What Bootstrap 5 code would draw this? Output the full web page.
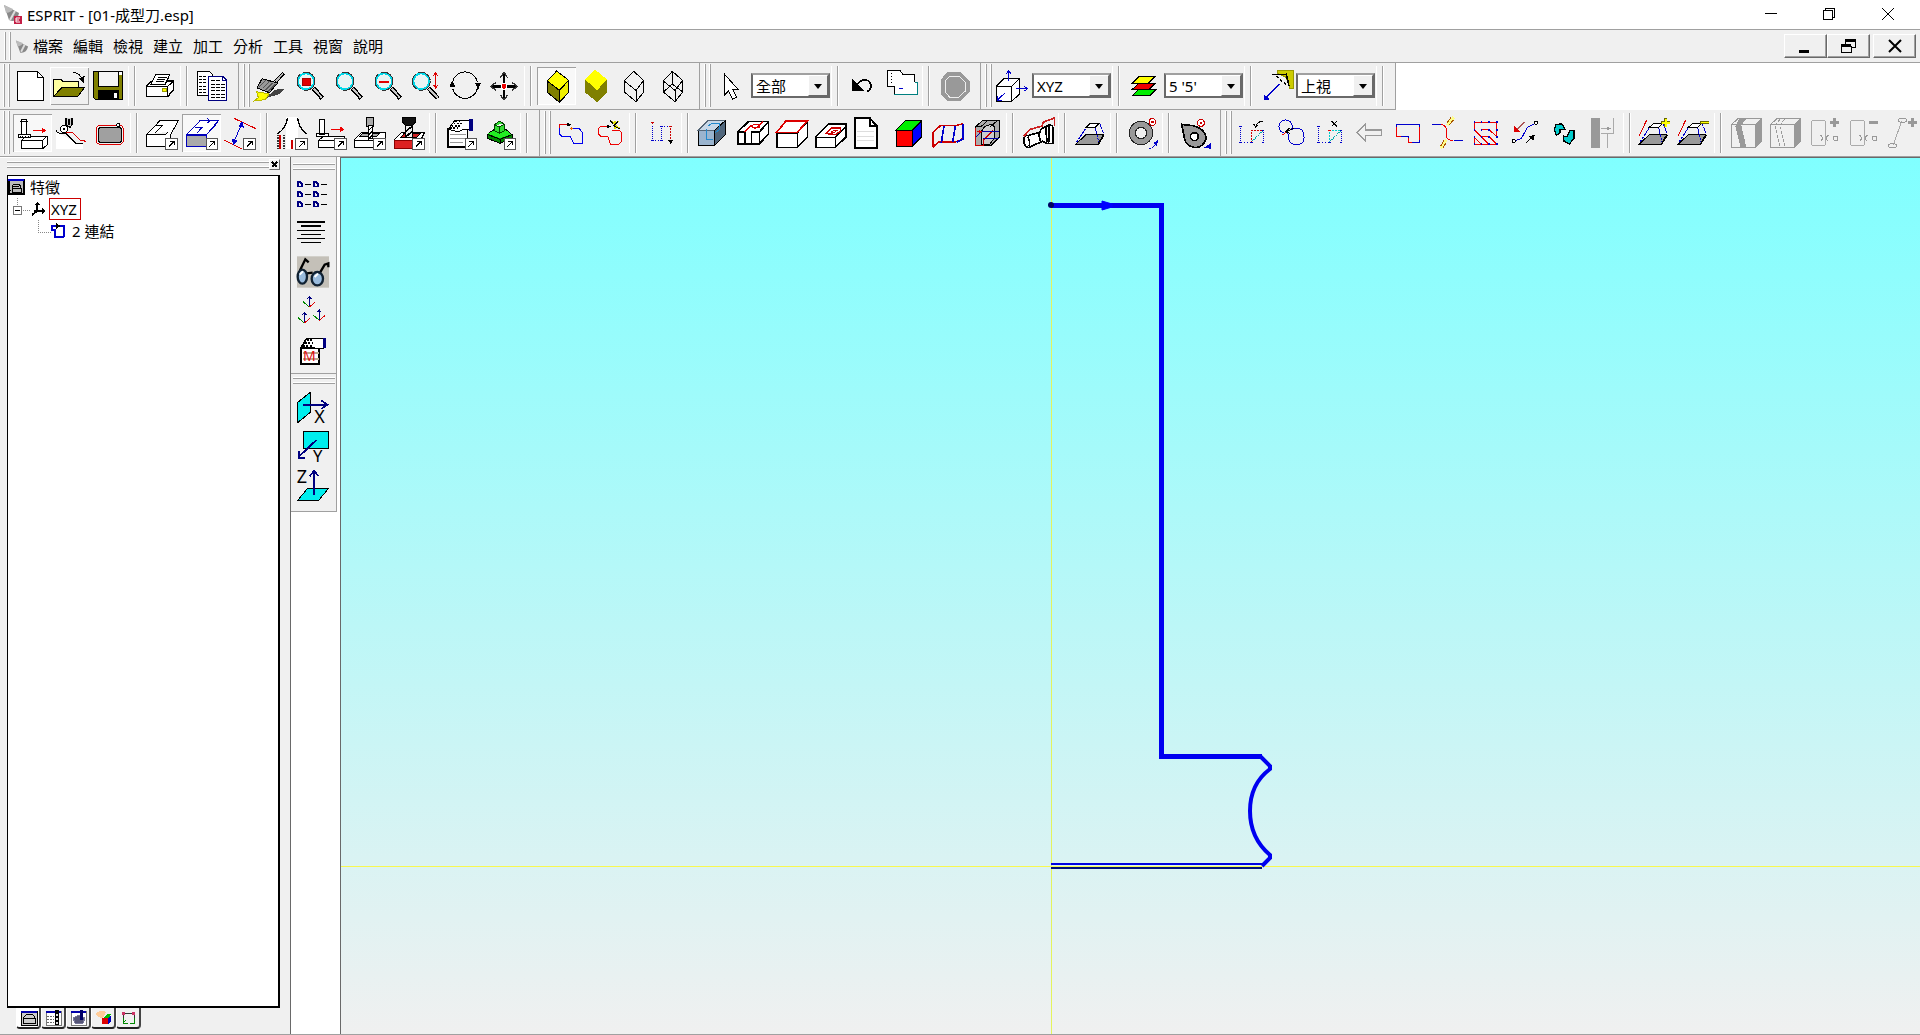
<!DOCTYPE html>
<html lang="zh-Hant">
<head>
<meta charset="utf-8">
<meta name="viewport" content="width=device-width, initial-scale=1">
<title>ESPRIT - [01-成型刀.esp]</title>
<link href="https://cdn.jsdelivr.net/npm/bootstrap@5.3.0/dist/css/bootstrap.min.css" rel="stylesheet">
<style>
:root{--face:#f0f0f0;--edge:#a0a0a0;--dark:#696969}
body{font-family:"Noto Sans","Noto Sans CJK TC",sans-serif;font-size:15px;line-height:20px;color:#000;background:#fff}
button{padding:0;border:0;background:none;color:inherit}
svg{display:block;fill:none;stroke:#000;stroke-width:3}
.titlebar{height:30px;border-bottom:1px solid var(--edge);background:#fff}
.app-icon{width:20px;height:22px}
.app-name{font-size:15px;margin-left:3px}
.win-btns{margin-right:2px}
.win-btn{width:59px;height:29px}
.menubar{height:33px;background:var(--face);border-bottom:1px solid var(--edge)}
.menubar .grip{height:28px}
.menu-links{margin-left:4px}
.menubar a{color:#000;text-decoration:none;width:40px;white-space:nowrap}
.mdi{width:43px;height:24px;background:var(--face);border:1px solid;border-color:#fff var(--dark) var(--dark) #fff;box-shadow:inset -1px -1px var(--edge)}
.mdi-btns{padding-right:4px}
.mdi-btns .mdi:last-child{margin-left:3px}
.grip{width:7px;flex:none;border:solid;border-width:0 1px;border-color:transparent var(--edge) transparent #fff;box-shadow:inset 1px 0 var(--edge),inset -1px 0 #fff}
.bar-row{height:47px;overflow:hidden;background:#fff}
.tbar{height:47px;flex:none;background:var(--face);padding:4px 6px 4px 4px;border-right:1px solid var(--edge);border-bottom:1px solid var(--edge);align-items:center}
.tbar .grip{height:43px;margin:-2px 1px 0 0}
.tbar .grip.snug{margin-right:0}
.tbar .grip.wide{margin-right:3px}
.bar-row.first-row{margin-left:-1px}
.tb{width:39px;height:38px;flex:none}
.tb svg{width:39px;height:38px}
.pressed{background:#f8f8f8;box-shadow:inset 1px 1px var(--edge),inset -1px -1px #fff}
.raised{box-shadow:inset 1px 1px #fff,inset -1px -1px var(--edge)}
.vsep{width:13px;height:40px;flex:none;border-left:6px solid transparent;background:linear-gradient(90deg,var(--edge) 1px,#fff 1px,#fff 2px,transparent 2px)}
.combo{width:79px;height:25px;background:#fff;border:2px solid;border-color:var(--edge) var(--dark) var(--dark) var(--dark);margin-top:-1px;margin-right:1px}
.combo select{width:100%;height:21px;border:0;appearance:none;background:#fff;padding:0 0 0 3px;font-size:15px;line-height:20px;color:#000}
.combo span{right:0;top:0;width:20px;height:21px;background:var(--face);border:1px solid;border-color:#fff var(--dark) var(--dark) #fff;pointer-events:none}
.combo span::after{content:"";position:absolute;left:5px;top:8px;border:4px solid transparent;border-top:5px solid #000;border-bottom:0}
.workspace{min-height:0;border-bottom:1px solid var(--edge)}
.side{width:290px;flex:none;background:var(--face);padding:1px 10px 4px 7px;border-top:1px solid #fff}
.hgrip{height:7px;border-top:1px solid #fff;border-bottom:1px solid var(--edge);box-shadow:inset 0 1px var(--edge),inset 0 -1px #fff}
.close-btn{width:11px;height:11px;border:1px solid;border-color:#fff var(--dark) var(--dark) #fff}
.tree-box{background:#fff;border:1px solid #000;border-width:1px 2px 2px 1px;margin-top:5px}
.tree-row{height:22px;white-space:nowrap}
.tree-row span{margin-left:5px}
.tree-row .picked{border:1px solid #c00;line-height:20px;height:22px;width:32px;margin-left:0;padding-left:1px}
.tabs-row{height:22px;padding-left:9px}
.tabs-row button{width:25px;height:21px;background:var(--face);border:solid;border-width:0 2px 2px 1px;border-color:#000 #444 #222 #fff;border-radius:0 0 4px 4px;padding-left:3px}
.tabs-row button:first-child{background:#fff}
.tools{width:51px;flex:none;border-left:1px solid var(--dark);border-right:1px solid var(--dark);background:#fff}
.vbar{width:46px;background:var(--face);border-right:1px solid var(--edge);border-bottom:1px solid var(--edge)}
.vbar.views{padding:6px 0 1px}
.vbar.planes{padding:3px 0 6px}
.vbar .hgrip{margin:0 1px 7px 2px}
.vbar.planes .hgrip{margin-bottom:4px}
.vt{width:45px;height:39px;display:block}
.vt svg{width:46px;height:39px;overflow:visible}
.viewport3d{background:linear-gradient(#80ffff,#f0f0f0);border-top:1px solid var(--dark);min-width:0}
.px{shape-rendering:crispEdges}
text{stroke:none;fill:#000}
</style>
</head>
<body class="vh-100 d-flex flex-column overflow-hidden">
<svg width="0" height="0" class="position-absolute" aria-hidden="true"><defs>
<symbol id="pop" viewBox="0 0 39 36" width="39" height="36" overflow="visible"><path d="M1 1H36V33H1Z" fill="#fff" stroke="#555"/><path d="M11 26L27 9M14 9H27V22"/></symbol>
<symbol id="lens" viewBox="0 0 117 114" width="117" height="114"><path d="M70 63L97 94" stroke="#000" stroke-width="14"/><path d="M71 65L96 92" stroke="#c8c8c8" stroke-width="6"/><circle cx="48" cy="43" r="24" fill="#e8f4f4" stroke="#00d8e8" stroke-width="6"/><circle cx="48" cy="43" r="27" stroke="#333" stroke-dasharray="50 8"/></symbol>
<symbol id="cone" viewBox="0 0 16 18"><path d="M1 2L6 16Q13 17 15 9Z" fill="#888" stroke="none"/><path d="M1 2L3 9Q8 8 9 5Z" fill="#bbb" stroke="none"/><path d="M7 15L11 7" stroke="#ddd" stroke-width="2"/></symbol>
<symbol id="taper" viewBox="0 0 117 114" width="117" height="114"><path d="M42 40L55 28H82L70 40Z" fill="#fff"/><path d="M12 90L42 62H94L78 90Z" fill="#999"/><path d="M12 90H80L97 62"/><path d="M14 84L42 42M84 30L95 58M70 42L80 84" stroke="#00c" stroke-dasharray="8 2"/></symbol>
</defs></svg>

<header class="titlebar d-flex align-items-center flex-shrink-0">
 <svg class="ms-1 app-icon" viewBox="0 0 20 22"><path d="M0 1L5 16Q13 20 15 9Z" fill="#888" stroke="none"/><path d="M0 1L2 9Q8 8 9 5Z" fill="#bbb" stroke="none"/><path d="M6 16L11 7" stroke="#ddd" stroke-width="2"/><path d="M10 12H18V20H10Z" fill="#c41e45" stroke="none"/><path d="M16 14H12V18H16M12 16H15" stroke="#fff" stroke-width="1"/></svg>
 <span class="app-name">ESPRIT - [01-成型刀.esp]</span>
 <div class="win-btns ms-auto d-flex px">
  <button class="win-btn" aria-label="最小化"><svg width="59" height="29" viewBox="0 0 59 29"><path d="M24 13.5H36" stroke-width="1"/></svg></button>
  <button class="win-btn" aria-label="還原"><svg width="59" height="29" viewBox="0 0 59 29"><path d="M23.5 10.5H32.5V19.5H23.5ZM25.5 10V8.5H34.5V17.5H33" stroke-width="1"/></svg></button>
  <button class="win-btn" aria-label="關閉"><svg width="59" height="29" viewBox="0 0 59 29" shape-rendering="auto"><path d="M23 8L35 20M35 8L23 20" stroke-width="1"/></svg></button>
 </div>
</header>

<nav class="menubar d-flex align-items-center flex-shrink-0 ps-1">
 <div class="grip"></div>
 <svg class="ms-1" width="14" height="17"><use href="#cone" width="14" height="17"/></svg>
 <div class="menu-links d-flex"><a href="#">檔案</a><a href="#">編輯</a><a href="#">檢視</a><a href="#">建立</a><a href="#">加工</a><a href="#">分析</a><a href="#">工具</a><a href="#">視窗</a><a href="#">說明</a></div>
 <div class="mdi-btns ms-auto d-flex px">
  <button class="mdi" aria-label="最小化文件"><svg width="41" height="22" viewBox="0 0 41 22"><path d="M14 16.5H24"/></svg></button>
  <button class="mdi" aria-label="還原文件"><svg width="41" height="22" viewBox="0 0 41 22"><path d="M17 5.5H28M13 10.5H23"/><path d="M17.5 9V6M27.5 6V12.5H24M13.5 11V17.5H23.5V11" stroke-width="1"/></svg></button>
  <button class="mdi" aria-label="關閉文件"><svg width="41" height="22" viewBox="0 0 41 22" shape-rendering="auto"><path d="M15 5L27 17M27 5L15 17" stroke-width="2"/></svg></button>
 </div>
</nav>

<div class="bar-row first-row d-flex flex-shrink-0 px">
 <div class="tbar d-flex"><div class="grip"></div>
  <button class="tb" aria-label="開新檔案"><svg viewBox="33 201 117 114"><path d="M52 214H112L130 232V301H52Z" fill="#fff"/><path d="M112 214V233H130"/></svg></button>
  <button class="tb raised" aria-label="開啟"><svg viewBox="150 201 117 114"><path d="M161 289V238H182L188 244H235V262" fill="#ffffa0"/><path d="M161 289L186 262H254L234 289Z" fill="#808000"/><path d="M219 218Q240 216 246 240"/><path d="M239 236L250 247L252 230Z" fill="#000"/></svg></button>
  <button class="tb" aria-label="儲存"><svg viewBox="267 201 117 114"><path d="M281 214H368V299H287L281 292Z" fill="#808000"/><path d="M295 214H355V258H295Z" fill="#f4f4f4"/><path d="M295 272H356V299H295Z" fill="#000"/><path d="M341 278H352V296H341Z" fill="#fff"/><path d="M358 217H366V224H358Z" fill="#fff" stroke="none"/></svg></button>
  <span class="vsep"></span>
  <button class="tb" aria-label="列印"><svg viewBox="423 201 117 114"><path d="M439 259L456 243H520V270L503 290H439Z" fill="#fff" stroke-width="4"/><path d="M439 259H503V290M503 259L520 243" stroke-width="4"/><path d="M453 252L468 223H510L496 252Z" fill="#fff"/><path d="M475 231H500M471 238H496M467 245H492"/><path d="M488 266H499V274H488Z" fill="#ff0" stroke="#990"/></svg></button>
  <span class="vsep"></span>
  <button class="tb" aria-label="複製"><svg viewBox="579 201 117 114"><path d="M592 214H628L638 225V287H592Z" fill="#fff"/><path d="M598 228H622M598 238H622M598 248H622M598 258H622M598 268H622M598 278H622" stroke-dasharray="9 3"/><path d="M625 229H668L680 241V301H625Z" fill="#fff" stroke="#000080"/><path d="M668 229V241H680" stroke="#000080"/><path d="M632 242H661M632 252H674M632 262H674M632 272H674M632 282H674M632 292H674" stroke-dasharray="12 3"/></svg></button>
 </div>
 <div class="tbar d-flex"><div class="grip"></div>
  <button class="tb" aria-label="重繪"><svg viewBox="753 201 117 114"><path d="M795 295L840 282L856 266L825 269Z" fill="#444" stroke="none"/><path d="M826 245L851 219" stroke="#000" stroke-width="10"/><path d="M827 244L850 220" stroke="#bbb" stroke-width="5"/><path d="M786 236L833 249L808 278L771 264Z" fill="#999"/><path d="M779 260L797 241M788 265L808 244M797 270L818 248M804 275L827 251" stroke="#555"/><path d="M770 275L807 282L796 299L762 303L775 293Z" fill="#ff0" stroke="#bb0"/></svg></button>
  <button class="tb" aria-label="框選縮放"><svg viewBox="0 0 117 114"><use href="#lens"/><path d="M36 35H62V54H36Z" fill="#e00000" stroke="#a00"/></svg></button>
  <button class="tb" aria-label="縮放"><svg viewBox="0 0 117 114"><use href="#lens"/></svg></button>
  <button class="tb" aria-label="縮小"><svg viewBox="0 0 117 114"><use href="#lens"/><path d="M33 46H64" stroke="#e00000" stroke-width="6"/></svg></button>
  <button class="tb" aria-label="動態縮放"><svg viewBox="0 0 117 114"><use href="#lens" x="-5"/><path d="M86 20V60M80 26L86 17L92 26M80 54L86 63L92 54" stroke="#d00"/></svg></button>
  <button class="tb" aria-label="旋轉"><svg viewBox="1338 201 117 114"><path d="M1358 245A38 38 0 0 1 1432 245M1358 266A38 38 0 0 0 1432 266"/><path d="M1350 260L1357 244L1365 260ZM1427 250L1434 266L1441 250Z" fill="#000"/></svg></button>
  <button class="tb" aria-label="平移"><svg viewBox="15 201 117 114"><path d="M72 220V298M33 259H111" stroke-width="8"/><path d="M61 234L72 217L83 234M61 285L72 300L83 285M48 247L32 259L48 271M96 247L112 259L96 271" stroke="#333" stroke-width="4"/><circle cx="72" cy="259" r="9" fill="#e00" stroke="#fff"/></svg></button>
  <span class="vsep"></span>
  <button class="tb pressed" aria-label="著色含邊"><svg viewBox="171 201 117 114"><path d="M202 243L230 213L266 241L238 271Z" fill="#ff0"/><path d="M202 243L238 271V307L202 277Z" fill="#808000"/><path d="M238 271L266 241V277L238 307Z" fill="#ee0"/></svg></button>
  <button class="tb" aria-label="著色"><svg viewBox="288 201 117 114"><path d="M315 238L345 209L381 238L351 271Z" fill="#ff0" stroke="none"/><path d="M315 238L351 271V306L315 277ZM381 238L351 271V306L381 277Z" fill="#808000" stroke="none"/></svg></button>
  <button class="tb" aria-label="隱藏線"><svg viewBox="405 201 117 114"><path d="M433 243L461 214L491 241V276L468 305L433 276ZM433 243L468 271L491 241M468 271V305"/></svg></button>
  <button class="tb" aria-label="線框"><svg viewBox="522 201 117 114"><path d="M550 243L577 214L608 241V276L585 305L550 276ZM550 243L585 271L608 241M585 271V305M577 214V252L550 276M577 252L608 276"/></svg></button>
 </div>
 <div class="tbar d-flex"><div class="grip"></div>
  <button class="tb" aria-label="選取"><svg viewBox="696 201 117 114"><path d="M733 222V286L746 273L758 298L770 292L758 269H775Z" fill="#fff"/></svg></button>
  <div class="combo position-relative"><select aria-label="選取類型"><option>全部</option></select><span class="position-absolute"></span></div>
  <span class="vsep"></span>
  <button class="tb" aria-label="復原"><svg viewBox="1089 201 117 114"><path d="M1123 262Q1135 239 1154 239Q1170 244 1170 258Q1170 270 1158 275" stroke-width="5"/><path d="M1115 241V270H1145Z" fill="#000"/></svg></button>
  <button class="tb" aria-label="群組"><svg viewBox="1206 201 117 114"><path d="M1219 212H1261L1266 222H1298L1301 248H1310V283H1242V258H1219Z" fill="#fff" stroke="none"/><path d="M1219 258V212H1258L1265 223H1300V246M1219 258H1240V283"/><path d="M1240 283H1310V248H1301" stroke="#008080"/><path d="M1230 220V250" stroke-dasharray="3 6"/><path d="M1255 265H1265" stroke="#00c"/></svg></button>
  <span class="vsep"></span>
  <button class="tb" aria-label="停止"><svg viewBox="1362 201 117 114"><path d="M1399 216H1438L1466 243V277L1438 304H1399L1380 284V238Z" fill="#999" stroke="none"/><path d="M1406 228H1434L1453 247V273L1434 291H1406L1392 276V243Z" stroke="#eee"/></svg></button>
 </div>
 <div class="tbar d-flex"><div class="grip"></div>
  <button class="tb" aria-label="工作座標"><svg viewBox="99 201 117 114"><path d="M109 259L132 236H179V282L155 304H109ZM109 259H155V304M155 259L179 236" fill="#fff"/><path d="M146 244V213M139 222L146 212L153 222M168 266H202M193 259L203 266L193 273M136 278L112 300M112 288V300H125" stroke="#00c"/></svg></button>
  <div class="combo position-relative"><select aria-label="工作座標系"><option>XYZ</option></select><span class="position-absolute"></span></div>
  <span class="vsep"></span>
  <button class="tb" aria-label="圖層"><svg viewBox="492 201 117 114"><path d="M514 287L534 268H586L567 287Z" fill="#0e0"/><path d="M514 268L534 249H584L565 268Z" fill="#e00"/><path d="M514 249L534 230H582L563 249Z" fill="#ff0"/></svg></button>
  <div class="combo position-relative"><select aria-label="目前圖層"><option>5 '5'</option></select><span class="position-absolute"></span></div>
  <span class="vsep"></span>
  <button class="tb" aria-label="視角"><svg viewBox="888 201 117 114"><path d="M950 210H996V264H986L976 232L950 220Z" fill="#cc0" stroke="#990"/><path d="M934 224L976 223L984 258" stroke-width="5"/><path d="M945 228L978 256" stroke-width="4" stroke-dasharray="10 5"/><path d="M956 252L912 296" stroke="#00c"/><path d="M910 300V286L923 297Z" fill="#00c" stroke="#00c"/></svg></button>
  <div class="combo position-relative"><select aria-label="目前視角"><option>上視</option></select><span class="position-absolute"></span></div>
  <span class="vsep"></span>
 </div>
</div>

<div class="bar-row first-row d-flex flex-shrink-0 px">
 <div class="tbar d-flex"><div class="grip wide"></div>
  <button class="tb pressed" aria-label="銑削"><svg viewBox="39 342 117 114"><path d="M64 421L80 408H142V434L128 446H64ZM64 421H128V446M128 421L142 408" fill="#fff"/><path d="M64 358H80V402H64ZM56 402H92V411H56Z" fill="#fff"/><path d="M60 364H84M60 408V414M68 408V414M76 408V414M84 408V414"/><path d="M98 391H128" stroke="#e00"/><path d="M126 385L137 391L126 397Z" fill="#e00" stroke="#e00"/></svg></button>
  <button class="tb" aria-label="曲面加工"><svg viewBox="156 342 117 114"><path d="M168 395L235 432L250 433V446H168Z" fill="#fff" stroke="none"/><path d="M198 354V376L210 382L216 374V354M207 356V374" fill="#ccc" stroke-width="4"/><circle cx="192" cy="387" r="11" fill="#fff"/><circle cx="192" cy="387" r="3"/><path d="M168 392Q178 405 198 401L212 414L228 431H250"/><path d="M198 399L218 398L240 420L258 424" stroke="#d00"/></svg></button>
  <button class="tb" aria-label="輪廓"><svg viewBox="273 342 117 114"><rect x="295" y="383" width="70" height="44" rx="7" fill="#a0a0a0"/><rect x="289" y="376" width="81" height="57" rx="12" stroke="#d00"/><circle cx="355" cy="375" r="5" fill="#fff"/></svg></button>
  <span class="vsep"></span>
  <button class="tb" aria-label="面特徵"><svg viewBox="429 342 117 114"><path d="M439 404L480 362H535L512 404V438H439ZM439 404H496L505 395" fill="#fff"/><path d="M466 376H488L466 398"/><use href="#pop" x="496" y="414"/></svg></button>
  <button class="tb pressed" aria-label="特徵鏈"><svg viewBox="546 342 117 114"><path d="M560 404L600 362H655L620 404ZM586 382H606L590 400" fill="#fff" stroke="#00b"/><path d="M560 405H620V440H560Z" fill="#aaa" stroke="#00b"/><path d="M620 404L655 365M622 356L630 362L622 369" stroke="#00b"/><use href="#pop" x="617" y="414"/></svg></button>
  <button class="tb" aria-label="尺寸"><svg viewBox="663 342 117 114"><path d="M702 355L768 386M673 421L727 447" stroke="#d00"/><path d="M724 374L702 425" stroke="#00c"/><path d="M717 378L726 367L730 381ZM698 418L700 432L710 423Z" fill="#00c" stroke="#00c"/><use href="#pop" x="730" y="414"/></svg></button>
  <span class="vsep"></span>
  <button class="tb" aria-label="車削刀具"><svg viewBox="819 342 117 114"><path d="M859 352H893V446H859Z" fill="#fff" stroke="none"/><path d="M862 354Q861 382 832 402M893 354Q894 382 921 402" stroke-width="4"/><path d="M833 404V446M852 404V446" stroke="#333" stroke-width="6" stroke-dasharray="5 3"/><path d="M841 404V446M877 420V446" stroke="#c00" stroke-width="6"/><use href="#pop" x="887" y="414"/></svg></button>
  <button class="tb" aria-label="銑削刀具"><svg viewBox="936 342 117 114"><path d="M955 421L972 408H1034V442H955ZM955 421H1016" fill="#fff"/><path d="M958 358H974V402H958ZM949 400H986V408H949Z" fill="#fff"/><path d="M994 388H1022" stroke="#e00"/><path d="M1021 382L1031 388L1021 394Z" fill="#e00" stroke="#e00"/><use href="#pop" x="1003" y="414"/></svg></button>
  <button class="tb" aria-label="鑽孔"><svg viewBox="1053 342 117 114"><path d="M1064 418L1085 397H1157V442H1064ZM1064 421H1130" fill="#fff"/><path d="M1078 410L1090 399H1140L1128 410Z" fill="#aaa"/><path d="M1100 352H1121V380H1100Z" fill="#aaa"/><path d="M1105 375H1116V416H1105Z" fill="#fff"/><path d="M1104 393L1117 380M1104 406L1117 393M1104 418L1117 405"/><use href="#pop" x="1120" y="414"/></svg></button>
  <button class="tb" aria-label="型腔"><svg viewBox="1170 342 117 114"><path d="M1183 420L1205 397H1274L1250 444H1183Z" fill="#fff"/><path d="M1183 421H1250V444H1183Z" fill="#d22" stroke="#800"/><path d="M1202 412L1212 401H1260L1249 414Z" fill="#c22"/><path d="M1207 353H1247V365L1237 378H1217L1207 365Z" fill="#111"/><path d="M1216 377H1238V412H1216Z" fill="#eee"/><path d="M1216 395L1238 378M1216 411L1238 394" stroke-width="5"/><use href="#pop" x="1237" y="414"/></svg></button>
  <span class="vsep"></span>
  <button class="tb" aria-label="特徵參數"><svg viewBox="1326 342 117 114"><path d="M1343 387H1402V441H1343Z" fill="#fff" stroke-width="5"/><path d="M1350 402H1398M1350 414H1398M1350 426H1390" stroke="#999" stroke-width="3"/><path d="M1345 388L1365 360H1410V389H1388L1375 396Z" fill="#fff"/><path d="M1350 384H1380M1355 378H1385M1361 370H1385M1366 364H1385" stroke-width="5" stroke-dasharray="5 5"/><path d="M1409 357H1418V391H1409Z" fill="#000080" stroke="#000080"/><use href="#pop" x="1394" y="414"/></svg></button>
  <button class="tb" aria-label="模型"><svg viewBox="3 342 117 114"><path d="M22 403L42 389H78L96 404V414L60 430L22 415Z" fill="#080"/><path d="M22 403L60 418L96 404M60 418V430"/><path d="M24 401L42 391H78L94 403L60 415Z" fill="#2e2" stroke="none"/><path d="M44 374L58 363L74 373V392L58 400L44 392ZM44 374L58 381L74 373M58 381V400" fill="#3d3" stroke="#040"/><use href="#pop" x="71" y="414"/></svg></button>
  <span class="vsep"></span>
 </div>
 <div class="tbar d-flex"><div class="grip snug"></div>
  <button class="tb" aria-label="自動鏈"><svg viewBox="213 342 117 114"><path d="M275 386H298L307 397V429H281L271 410H246L238 402V374" stroke="#00e"/><path d="M238 385V374H262" stroke="#d00"/><path d="M260 368L275 374L260 380Z" fill="#000" stroke="none"/><path d="M269 385H279M274 380V390" stroke="#e60"/></svg></button>
  <button class="tb" aria-label="手動鏈"><svg viewBox="330 342 117 114"><path d="M381 380H362L355 386V402L364 410H384L391 432H417L425 425V397L416 390H396" stroke="#e00"/><path d="M380 374L394 380L380 386Z" fill="#000" stroke="none"/><path d="M394 364L420 386M416 364L401 378M405 364V386" stroke="#dd0" stroke-width="4"/><path d="M391 362L400 371M414 364L401 378L419 386"/></svg></button>
  <span class="vsep"></span>
  <button class="tb" aria-label="點群"><svg viewBox="486 342 117 114"><path d="M517 379V422M544 422V379" stroke="#00c" stroke-dasharray="3 3"/><path d="M517 422H544M544 379H571" stroke="#00c" stroke-dasharray="3 6"/><path d="M517 365V376M572 384V420" stroke="#c00" stroke-dasharray="6 3"/><path d="M513 367H521M568 379H576" stroke="#c00"/><path d="M540 379H548M513 422H521M540 422H548" stroke="#00c"/><path d="M567 422H577L572 430Z" fill="#000"/></svg></button>
  <span class="vsep"></span>
  <button class="tb" aria-label="實體"><svg viewBox="642 342 117 114"><path d="M655 391L684 361H737V403L702 437H655Z" fill="#9ab4ce"/><path d="M655 391L684 361H737L710 391Z" fill="#c8d8e8" stroke="#567"/><path d="M703 391L737 361V403L703 437Z" fill="#50667c"/><path d="M680 388V418H700M684 378L696 370H717V390L706 398" stroke="#28c"/></svg></button>
  <button class="tb" aria-label="槽"><svg viewBox="759 342 117 114"><path d="M773 396L806 364H865V402L838 432H773Z" fill="#fff" stroke-width="5"/><path d="M773 396H794V432M814 396H838V432M838 396L865 366M814 396V432" stroke-width="5"/><path d="M794 396L812 377L826 386L848 365" stroke="#d00" stroke-width="4"/><ellipse cx="829" cy="378" rx="11" ry="6" stroke="#d00"/></svg></button>
  <button class="tb" aria-label="面"><svg viewBox="876 342 117 114"><path d="M890 398H952V442H890ZM952 398L982 364V411L952 442Z" fill="#fff" stroke-width="5"/><path d="M890 397L918 363H982L952 397Z" fill="#fff" stroke="#d00" stroke-width="5"/></svg></button>
  <button class="tb" aria-label="型腔特徵"><svg viewBox="993 342 117 114"><path d="M1007 410L1045 372H1098V411L1066 442H1007ZM1007 412H1066V442M1066 412L1098 380" fill="#fff" stroke-width="5"/><path d="M1038 401L1054 384H1082V394L1067 403Z" stroke="#c00" stroke-width="4"/><path d="M1052 396L1065 390H1073L1065 396Z" stroke="#c00"/></svg></button>
  <button class="tb" aria-label="文件"><svg viewBox="1110 342 117 114"><path d="M1125 354H1169L1191 378V444H1125Z" fill="#fff" stroke-width="6"/><path d="M1169 354V378H1191" stroke-width="5"/><path d="M1132 395H1182M1132 408H1182M1132 421H1182" stroke="#ddd"/></svg></button>
  <button class="tb" aria-label="彩色方塊"><svg viewBox="1227 342 117 114"><path d="M1249 390L1276 362H1325L1298 390Z" fill="#0e0"/><path d="M1249 390H1298V438H1249Z" fill="#f00"/><path d="M1298 390L1325 362V410L1298 438Z" fill="#00f"/></svg></button>
  <button class="tb" aria-label="曲面"><svg viewBox="1344 342 117 114"><path d="M1358 442V398L1382 376H1430L1450 371M1358 442L1375 426H1420Q1440 425 1447 415" stroke="#c00" stroke-width="5"/><path d="M1384 428L1392 378M1418 426L1426 378M1448 372V418L1430 427" stroke="#00c" stroke-width="5"/></svg></button>
  <button class="tb" aria-label="實體加工"><svg viewBox="21 342 117 114"><path d="M47 380L67 362H119V410L94 436H47Z" fill="#aaa"/><path d="M63 398Q70 376 91 374Q104 374 104 388L105 412L88 434H63Z" fill="#ccc"/><path d="M47 380H63L82 362M91 380L110 364"/><path d="M47 385V436H70V420L100 391M50 395H66" stroke="#c00"/><path d="M47 412L66 394H116M68 414H116" stroke="#00a"/><path d="M56 390L67 395L56 401Z" fill="#e00" stroke="none"/></svg></button>
  <span class="vsep"></span>
  <button class="tb" aria-label="車削輪廓"><svg viewBox="177 342 117 114"><path d="M191 420Q192 405 203 407L240 397Q240 385 259 379Q275 370 279 382V430H260L247 424L205 443Q191 438 191 420Z" fill="#fff" stroke-width="5"/><path d="M203 410Q212 426 207 440M238 398Q236 412 242 426M259 380Q257 402 262 427M267 377Q269 402 266 428" stroke-width="5"/><path d="M191 409L211 388L246 378L249 367L283 354V378" stroke="#c22" stroke-width="5"/></svg></button>
  <span class="vsep"></span>
  <button class="tb" aria-label="斜度"><svg viewBox="0 0 117 114"><use href="#taper" x="3"/></svg></button>
  <span class="vsep"></span>
  <button class="tb" aria-label="旋轉軸"><svg viewBox="489 342 117 114"><circle cx="543" cy="399" r="26" stroke="#222" stroke-width="21"/><circle cx="543" cy="399" r="26" stroke="#999" stroke-width="15"/><circle cx="577" cy="366" r="10" fill="#fff" stroke="#c00"/><circle cx="577" cy="366" r="3" stroke="#c00"/><path d="M568 445Q586 442 590 425" stroke="#00c" stroke-dasharray="6 3"/><path d="M580 430L594 419L591 440Z" fill="#00c" stroke="none"/></svg></button>
  <span class="vsep"></span>
  <button class="tb" aria-label="凸輪"><svg viewBox="645 342 117 114"><path d="M665 373L699 377Q735 386 739 415Q731 442 705 443Q679 438 674 418Z" fill="#999" stroke-width="5"/><circle cx="703" cy="410" r="12" fill="#fff" stroke-width="5"/><circle cx="723" cy="369" r="10" fill="#fff" stroke="#c00"/><circle cx="723" cy="369" r="3" stroke="#c00"/><path d="M730 444L752 430V446Z" fill="#00c" stroke="none"/></svg></button>
 </div>
 <div class="tbar d-flex"><div class="grip"></div>
  <button class="tb" aria-label="點鏈"><svg viewBox="822 342 117 114"><path d="M845 379V428M912 428V391" stroke="#00c" stroke-dasharray="3 3"/><path d="M845 428H878" stroke="#00c" stroke-dasharray="3 6"/><path d="M878 428V391H912" stroke="#c00" stroke-dasharray="6 3"/><path d="M880 424L910 394" stroke="#0aa" stroke-dasharray="3 3"/><path d="M841 379H849M841 428H849M874 428H882M908 428H916M908 391H916" stroke="#00c"/><path d="M911 364Q896 364 891 377M884 372L890 382L898 374"/></svg></button>
  <button class="tb" aria-label="圓弧鏈"><svg viewBox="939 342 117 114"><path d="M974 399A20 20 0 1 1 998 388Q1016 379 1029 390Q1038 402 1034 424Q1024 437 1004 433Q986 429 988 402L981 397" stroke="#00c"/><path d="M980 397L1006 384M992 384L980 395L994 401"/><path d="M970 405L980 398" stroke="#e00"/></svg></button>
  <button class="tb" aria-label="刪除鏈點"><svg viewBox="1056 342 117 114"><path d="M1079 379V428M1146 428V391" stroke="#00c" stroke-dasharray="3 3"/><path d="M1079 428H1112" stroke="#00c" stroke-dasharray="3 6"/><path d="M1112 428V391H1146" stroke="#0cc" stroke-dasharray="6 3"/><path d="M1114 424L1144 394" stroke="#0aa" stroke-dasharray="3 3"/><path d="M1075 379H1083M1075 428H1083M1108 428H1116M1142 428H1150M1142 391H1150" stroke="#00c"/><path d="M1108 391H1116" stroke="#e00"/><path d="M1118 364L1134 379M1134 364L1118 379"/></svg></button>
  <button class="tb" aria-label="反向"><svg viewBox="1173 342 117 114"><path d="M1194 397L1219 372V390H1267V406H1219V424Z" stroke="#999" stroke-width="4"/></svg></button>
  <button class="tb" aria-label="封閉輪廓"><svg viewBox="1290 342 117 114"><path d="M1312 373H1382V428H1347V410H1312Z" stroke="#00c"/><path d="M1312 380V410H1325M1382 380V420M1347 415V428H1360" stroke="#e00"/></svg></button>
  <button class="tb" aria-label="圓角"><svg viewBox="-33 342 117 114"><path d="M25 376L44 352M5 444L22 420" stroke="#ff8" stroke-width="9"/><path d="M-22 373H5M44 421H72" stroke="#00c"/><path d="M6 374Q22 375 22 392V407Q23 421 42 421" stroke="#e00"/><path d="M23 370L36 353M31 374L43 360M5 438L15 422M12 443L22 428" stroke="#a50"/></svg></button>
  <button class="tb" aria-label="路徑"><svg viewBox="84 342 117 114"><path d="M173 367H106V389L150 433M127 389H150L173 409V367M127 409H150L173 433H106V411L127 433" stroke="#e00"/><path d="M104 367h5M125 367h5M148 367h5M171 367h5M104 389h5M125 389h5M148 389h5M171 389h5M104 411h5M125 411h5M148 411h5M171 411h5M104 433h5M125 433h5M148 433h5M171 433h5" stroke="#00c" stroke-width="6"/></svg></button>
  <button class="tb" aria-label="起終點"><svg viewBox="201 342 117 114"><path d="M228 422L247 416L265 382L287 371" stroke="#00c"/><circle cx="291" cy="368" r="5" fill="#fff"/><circle cx="224" cy="423" r="5" fill="#fff"/><path d="M257 366L235 388" stroke="#a55" stroke-width="5"/><path d="M226 396V377L245 395Z" fill="#d00" stroke="none"/><path d="M262 428L275 415" stroke-width="4"/><path d="M269 408L287 405L283 422Z" fill="#000" stroke="none"/></svg></button>
  <button class="tb" aria-label="循環"><svg viewBox="318 342 117 114"><path d="M378 388L368 371L350 374L346 390L352 406L364 398L362 390Z" fill="#0cc" stroke-width="4"/><path d="M392 392H405V416L391 432L375 424L373 408L384 410Z" fill="#0cc" stroke-width="4"/></svg></button>
  <button class="tb" aria-label="邊界"><svg viewBox="435 342 117 114"><path d="M456 354H483V444H456Z" fill="#999" stroke="none"/><path d="M524 354V401H485M506 401V444M486 385H512" stroke="#aaa"/><path d="M504 379L516 385L504 392Z" fill="#999" stroke="none"/></svg></button>
  <span class="vsep"></span>
  <button class="tb" aria-label="新增斜度"><svg viewBox="0 0 117 114"><use href="#taper" x="-2"/><path d="M10 65L32 18" stroke="#d00"/><path d="M89 12V40M75 26H103" stroke="#660" stroke-width="9"/><path d="M89 14V38M77 26H101" stroke="#ff0" stroke-width="5"/></svg></button>
  <button class="tb" aria-label="移除斜度"><svg viewBox="0 0 117 114"><use href="#taper" x="-2"/><path d="M10 65L32 18" stroke="#d00"/><path d="M75 25H103" stroke="#660" stroke-width="9"/><path d="M77 25H101" stroke="#ff0" stroke-width="5"/></svg></button>
  <span class="vsep"></span>
  <button class="tb" aria-label="切割面" disabled><svg viewBox="864 342 117 114"><path d="M877 374L897 356H968V424L948 442H877ZM877 374H948V442" stroke="#999"/><path d="M948 374L968 356V424L948 442Z" fill="#999" stroke="#999"/><path d="M900 358H920L907 377L922 442H905L889 379Z" fill="#999" stroke="none"/></svg></button>
  <button class="tb" aria-label="切割線" disabled><svg viewBox="981 342 117 114"><path d="M994 374L1014 356H1085V424L1065 442H994ZM994 374H1065V442" stroke="#999"/><path d="M1065 374L1085 356V424L1065 442Z" fill="#999" stroke="#999"/><path d="M1023 358L1008 377L1023 442M1036 358L1022 377L1039 442" stroke="#999" stroke-dasharray="9 4"/></svg></button>
  <button class="tb" aria-label="新增孔" disabled><svg viewBox="1098 342 117 114"><rect x="1118" y="361" width="41" height="75" rx="5" stroke="#aaa"/><path d="M1145 405Q1155 415 1145 425M1168 405Q1157 415 1168 425" stroke="#999"/><circle cx="1190" cy="415" r="7" stroke="#999"/><path d="M1186 354V382M1172 368H1200" stroke="#999" stroke-width="8"/></svg></button>
  <button class="tb" aria-label="移除孔" disabled><svg viewBox="1215 342 117 114"><rect x="1235" y="361" width="41" height="75" rx="5" stroke="#aaa"/><path d="M1262 405Q1272 415 1262 425M1285 405Q1274 415 1285 425" stroke="#999"/><circle cx="1307" cy="415" r="7" stroke="#999"/><path d="M1290 368H1317" stroke="#999" stroke-width="8"/></svg></button>
  <button class="tb" aria-label="新增連線" disabled><svg viewBox="1332 342 117 114"><path d="M1388 364L1363 434" stroke="#aaa"/><ellipse cx="1391" cy="361" rx="13" ry="6" stroke="#999"/><ellipse cx="1361" cy="437" rx="13" ry="6" stroke="#999"/><path d="M1421 354V382M1407 368H1435" stroke="#999" stroke-width="8"/></svg></button>
 </div>
</div>

<main class="workspace d-flex flex-fill">
 <aside class="side d-flex flex-column">
  <div class="d-flex align-items-center px"><div class="hgrip flex-fill"></div><button class="close-btn" aria-label="關閉面板"><svg width="9" height="9" viewBox="0 0 9 9"><path d="M2 2L7 7M7 2L2 7" stroke-width="2"/></svg></button></div>
  <div class="tree-box flex-fill">
   <div class="tree-row d-flex align-items-center"><svg class="px" width="17" height="16" viewBox="0 0 17 16"><path d="M1 1H16V15H1Z" fill="#bbb" stroke-width="2"/><path d="M0 1H16" stroke="#00c" stroke-width="2"/><path d="M4 9Q4 5 8 5Q13 5 13 9V13H4ZM4 9H13M5 7H11M1 11H3" stroke-width="1"/></svg><span>特徵</span></div>
   <div class="tree-row d-flex align-items-center"><svg class="px" width="41" height="22" viewBox="0 0 41 22"><path d="M9.5 0V8M15 12.5H23" stroke="#888" stroke-width="1" stroke-dasharray="1 1"/><path d="M5.5 8.5H13.5V16.5H5.5Z" stroke="#777" stroke-width="1"/><path d="M7 12.5H12" stroke-width="1"/><path d="M29 5V13H36M29 13L24 17M26 13H32" stroke-width="2"/><path d="M26 7L29 4L32 7ZM34 10L37 13L34 16Z" fill="#000" stroke="none"/></svg><span class="picked">XYZ</span></div>
   <div class="tree-row d-flex align-items-center"><svg class="px" width="59" height="22" viewBox="0 0 59 22"><path d="M30.5 0V12.5H43" stroke="#888" stroke-width="1" stroke-dasharray="1 1"/><path d="M48 6H56V16L55 17H47V10H44V6Z" stroke="#00c" stroke-width="2"/><path d="M48 3V9L53 6Z" fill="#000" stroke="none"/></svg><span>2 連結</span></div>
  </div>
  <div class="tabs-row d-flex px">
   <button aria-label="特徵"><svg width="18" height="17" viewBox="0 0 18 17"><path d="M1 2H17V16H1Z" fill="#ccc" stroke-width="1"/><path d="M1 2.5H17" stroke="#00a" stroke-width="2"/><path d="M3 9Q6 5 9 5Q14 5 15 9V14H3ZM3 9H15" stroke-width="1"/></svg></button>
   <button aria-label="刀具"><svg width="18" height="17" viewBox="0 0 18 17"><path d="M1 2H16V16H1Z" fill="#fff" stroke="#777" stroke-width="1"/><path d="M1 2.5H16" stroke="#00a" stroke-width="2"/><path d="M2 7H9M2 10H9M2 13H9" stroke="#666" stroke-width="1" stroke-dasharray="2 1"/><path d="M12 1V16" stroke-width="4"/><path d="M12 5V16" stroke="#ddd" stroke-width="2" stroke-dasharray="2 2"/></svg></button>
   <button aria-label="操作"><svg width="18" height="17" viewBox="0 0 18 17"><path d="M1 2H16V16H1Z" fill="#fff" stroke="#777" stroke-width="1"/><path d="M1 2.5H16" stroke="#00a" stroke-width="2"/><path d="M3 9L9 6L15 9L13 14H5Z" fill="#557" stroke="#779" stroke-width="1"/><path d="M11 1V11" stroke="#006" stroke-width="3"/></svg></button>
   <button aria-label="外觀"><svg width="18" height="17" viewBox="0 0 18 17"><path d="M1 5Q4 0 11 3L8 9Q3 9 1 5Z" fill="#fc9" stroke="none"/><path d="M8 9L12 5H16L14 9Z" fill="#0b0" stroke="none"/><path d="M7 9H13V15H7Z" fill="#d00" stroke="none"/><path d="M13 9L16 6V12L13 15Z" fill="#00b" stroke="none"/></svg></button>
   <button aria-label="路徑"><svg width="18" height="17" viewBox="0 0 18 17"><path d="M3 12V4H14V12" stroke="#333" stroke-width="1"/><path d="M2 3H5V6H2ZM12 3H15V6H12Z" fill="#c36" stroke="none"/><path d="M3 9V14H8M14 9V14H10M6 11L3 14" stroke="#080" stroke-width="1"/></svg></button>
  </div>
 </aside>

 <div class="tools px">
  <div class="vbar views">
   <div class="hgrip"></div>
   <button class="vt" aria-label="遮罩"><svg viewBox="873 80 138 117"><path d="M893 95H900L906 101V108H893ZM941 95H948L954 101V108H941ZM893 125H900L906 131V138H893ZM941 125H948L954 131V138H941ZM893 155H900L906 161V168H893ZM941 155H948L954 161V168H941Z" stroke="#000080" stroke-width="5"/><path d="M915 102H932M963 102H981M915 132H932M963 132H981M915 162H932M963 162H981" stroke-width="5"/></svg></button>
   <button class="vt" aria-label="對齊"><svg viewBox="873 194 138 117"><path d="M891 212H975M903 224H963M891 237H975M903 249H963M891 261H975M903 273H963" stroke-width="5"/></svg></button>
   <button class="vt" aria-label="檢查"><svg viewBox="873 311 138 117" shape-rendering="auto"><path d="M891 315H987V409H891Z" fill="#c4c0b8" stroke="none"/><path d="M900 357L916 324L926 333M960 364L974 340L985 336V348M920 366L938 364" stroke-width="7"/><ellipse cx="907" cy="376" rx="14" ry="21" fill="#9bd" stroke="#123" stroke-width="7"/><ellipse cx="952" cy="382" rx="17" ry="20" fill="#9bd" stroke="#123" stroke-width="7"/><path d="M899 370L909 360M944 377L954 367" stroke="#fff" stroke-width="6"/></svg></button>
   <button class="vt" aria-label="座標系"><svg viewBox="873 428 138 117"><g id="axes"><path d="M928 467V436M922 443L928 436L934 443" stroke="#000080"/><path d="M928 467L908 450" stroke="#080"/><path d="M928 467L946 452" stroke="#d00"/></g><use href="#axes" x="-15" y="48"/><use href="#axes" x="30" y="40"/></svg></button>
   <button class="vt" aria-label="加工參數"><svg viewBox="873 545 138 117"><path d="M903 590H958V639H903Z" fill="#fff" stroke-width="6"/><path d="M908 604H956M908 622H956" stroke="#b9a98d" stroke-width="6"/><path d="M904 588L920 561H970V591H945L920 588Z" fill="#fff" stroke-width="5"/><path d="M908 584H940M914 575H940M920 566H940" stroke-width="6" stroke-dasharray="6 5"/><path d="M968 559H977V591H968Z" fill="#000080" stroke="none"/><text x="909" y="629" font-size="42" style="fill:#d11">M</text></svg></button>
  </div>
  <div class="vbar planes">
   <div class="hgrip"></div>
   <button class="vt" aria-label="X 平面"><svg viewBox="63 82 138 117"><path d="M83 125L121 95V155L83 186Z" fill="#0ee"/><path d="M100 132H170M154 120L172 132L154 144" stroke="#000080" stroke-width="5"/><text x="133" y="188" font-size="54">X</text></svg></button>
   <button class="vt" aria-label="Y 平面"><svg viewBox="63 199 138 117"><path d="M101 212H175V262H101Z" fill="#0ee"/><path d="M140 237L86 289M86 272V291H104" stroke="#000080" stroke-width="5"/><text x="129" y="304" font-size="50">Y</text></svg></button>
   <button class="vt" aria-label="Z 平面"><svg viewBox="63 316 138 117"><path d="M83 419L113 383H176L146 419Z" fill="#0ee"/><path d="M132 402V332M119 347L132 330L146 347" stroke="#000080" stroke-width="5"/><text x="80" y="368" font-size="54">Z</text></svg></button>
  </div>
 </div>

 <section class="viewport3d flex-fill" aria-label="繪圖區">
  <svg width="100%" height="100%">
   <path class="px" d="M710.5 0V2000" stroke="#e4f45c" stroke-width="1"/>
   <path class="px" d="M0 708.5H4000" stroke="#f8f850" stroke-width="1"/>
   <path d="M710 47.5H820.5V599.5" stroke="#0000f0" stroke-width="5"/>
   <path d="M818 598.5H921" stroke="#0000f0" stroke-width="5"/>
   <path d="M919 598L929 608V611Q909 626 909 653Q909 680 929 697V700L921 708" stroke="#0000f0" stroke-width="4"/>
   <path class="px" d="M710 706H922" stroke="#0000e0" stroke-width="2"/>
   <path class="px" d="M710 710H921" stroke="#001078" stroke-width="2"/>
   <path d="M761 43V52L771 49V46Z" fill="#00f" stroke="#00f" stroke-width="1"/>
   <circle cx="710" cy="47" r="3" fill="#000060" stroke="none"/>
  </svg>
 </section>
</main>
<script src="https://cdn.jsdelivr.net/npm/bootstrap@5.3.0/dist/js/bootstrap.bundle.min.js"></script>
</body>
</html>
